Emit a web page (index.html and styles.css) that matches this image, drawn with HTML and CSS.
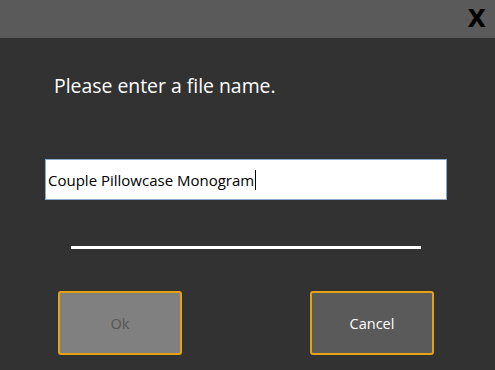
FILE: index.html
```html
<!DOCTYPE html>
<html>
<head>
<meta charset="utf-8">
<link rel="stylesheet" href="styles.css">
</head>
<body>
<div class="dialog">
  <div class="titlebar"><span class="close">X</span></div>
  <div class="content">
    <p class="prompt">Please enter a file name.</p>
    <div class="field"><span class="value">Couple Pillowcase Monogram</span><span class="caret"></span></div>
    <div class="rule"></div>
    <div class="actions">
      <button class="btn btn-ok">Ok</button>
      <button class="btn btn-cancel">Cancel</button>
    </div>
  </div>
</div>
</body>
</html>
```
FILE: styles.css
```css
html, body {
  margin: 0;
  padding: 0;
  width: 495px;
  height: 370px;
  overflow: hidden;
  background: #323232;
  font-family: "Open Sans", "Noto Sans", sans-serif;
}
.dialog {
  width: 495px;
  height: 370px;
  display: flex;
  flex-direction: column;
}
.titlebar {
  height: 38px;
  background: #5a5a5a;
  display: flex;
  justify-content: flex-end;
  align-items: center;
  padding-right: 9px;
}
.close {
  font-family: "DejaVu Sans", sans-serif;
  font-weight: bold;
  font-size: 24px;
  color: #000;
  line-height: 1;
}
.content {
  flex: 1;
  display: flex;
  flex-direction: column;
  padding: 0 48px 0 45px;
}
.prompt {
  margin: 35px 0 0 9px;
  color: #fff;
  font-size: 19.4px;
  line-height: 26px;
}
.field {
  margin-top: 60px;
  height: 41px;
  box-sizing: border-box;
  border: 1px solid #8aa9cc;
  background: #fff;
  display: flex;
  align-items: center;
  padding-left: 2px;
}
.value {
  font-size: 15px;
  color: #000;
  line-height: 20px;
}
.caret {
  width: 1px;
  height: 20px;
  background: #000;
  margin-left: 1px;
}
.rule {
  margin: 46px 26px 0 26px;
  height: 3px;
  background: #fff;
}
.actions {
  margin-top: 42px;
  display: flex;
  justify-content: space-between;
  padding: 0 13px 0 13px;
}
.btn {
  width: 124px;
  height: 64px;
  box-sizing: border-box;
  border: 2px solid #e5a212;
  border-radius: 3px;
  font-family: "Open Sans", "Noto Sans", sans-serif;
  font-size: 14.5px;
  padding: 0;
}
.btn-ok {
  background: #808080;
  color: #555;
}
.btn-cancel {
  background: #5a5a5a;
  color: #fff;
}
```
